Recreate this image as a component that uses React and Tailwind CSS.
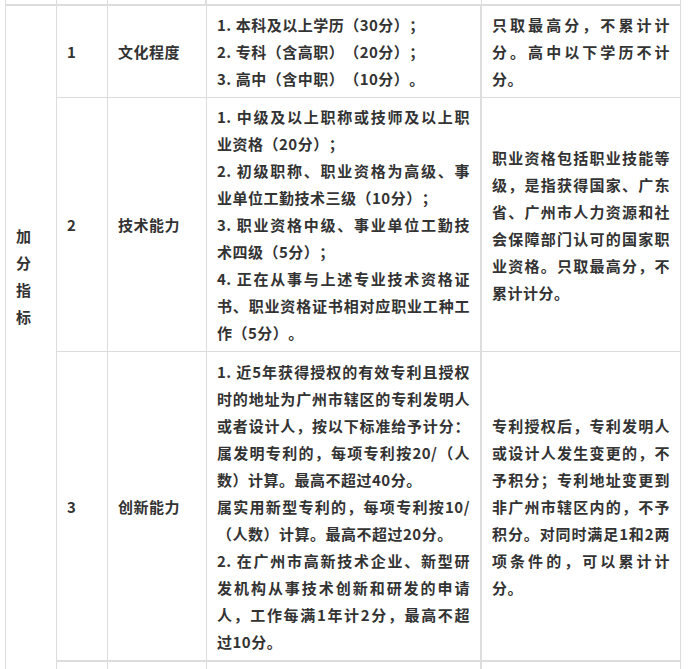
import React from 'react';

// one visual line; justified lines stretch to the cell width like the original wrap
const Line = ({ children, j }) => (
    <div className={j ? 'text-justify [text-align-last:justify]' : 'text-left'}>{children}</div>
);

const Lines = ({ rows }) => (
    <div>
        {rows.map(([t, j], i) => (
            <Line key={i} j={j}>{t}</Line>
        ))}
    </div>
);

const b = 'border-r border-b border-[#ddd] px-[10px]';

const rows = [
    {
        no: '1',
        name: '文化程度',
        detail: [
            ['1. 本科及以上学历（30分）；'],
            ['2. 专科（含高职）（20分）；'],
            ['3. 高中（含中职）（10分）。'],
        ],
        note: [
            ['只取最高分，不累计计', true],
            ['分。高中以下学历不计', true],
            ['分。'],
        ],
    },
    {
        no: '2',
        name: '技术能力',
        detail: [
            ['1. 中级及以上职称或技师及以上职', true],
            ['业资格（20分）；'],
            ['2. 初级职称、职业资格为高级、事', true],
            ['业单位工勤技术三级（10分）；'],
            ['3. 职业资格中级、事业单位工勤技', true],
            ['术四级（5分）；'],
            ['4. 正在从事与上述专业技术资格证', true],
            ['书、职业资格证书相对应职业工种工', true],
            ['作（5分）。'],
        ],
        note: [
            ['职业资格包括职业技能等', true],
            ['级，是指获得国家、广东', true],
            ['省、广州市人力资源和社', true],
            ['会保障部门认可的国家职', true],
            ['业资格。只取最高分，不', true],
            ['累计计分。'],
        ],
    },
    {
        no: '3',
        name: '创新能力',
        detail: [
            ['1. 近5年获得授权的有效专利且授权', true],
            ['时的地址为广州市辖区的专利发明人', true],
            ['或者设计人，按以下标准给予计分：', true],
            ['属发明专利的，每项专利按20/（人', true],
            ['数）计算。最高不超过40分。'],
            ['属实用新型专利的，每项专利按10/', true],
            ['（人数）计算。最高不超过20分。'],
            ['2. 在广州市高新技术企业、新型研', true],
            ['发机构从事技术创新和研发的申请', true],
            ['人，工作每满1年计2分，最高不超', true],
            ['过10分。'],
        ],
        note: [
            ['专利授权后，专利发明人', true],
            ['或设计人发生变更的，不', true],
            ['予积分；专利地址变更到', true],
            ['非广州市辖区内的，不予', true],
            ['积分。对同时满足1和2两', true],
            ['项条件的，可以累计计', true],
            ['分。'],
        ],
    },
];

const App = () => {
    return (
        <div className="h-[669px] overflow-hidden bg-white">
            <div className="ml-[5px] w-max border-l border-[#ddd] grid grid-cols-[51px_51px_99px_275px_199px] grid-rows-[6px_92px_254px_310px_40px] font-['Noto_Sans_CJK_SC',sans-serif] font-bold text-[15px] leading-[27px] tracking-[0.5px] text-[#333] [text-spacing-trim:space-all]">
                {/* tail of the row above */}
                <div className="border-r border-b-2 border-[#ddd]"></div>
                <div className="border-r border-b-2 border-[#ddd]"></div>
                <div className="border-r-2 border-b-2 border-[#ddd]"></div>
                <div className="border-r border-b-2 border-[#ddd]"></div>
                <div className="border-r border-b-2 border-[#ddd]"></div>

                {/* --- 加分指标 spans all rows --- */}
                <div className="col-start-1 row-start-2 row-span-4 border-r border-[#ddd] px-[10px] pt-[216px]">
                    {'加分指标'.split('').map((c) => (
                        <div key={c}>{c}</div>
                    ))}
                </div>

                {rows.map((r, i) => (
                    <React.Fragment key={r.no}>
                        <div className={`${b} ${i === 2 ? 'border-b-2' : ''} flex items-center`}>{r.no}</div>
                        <div className={`${b} ${i === 2 ? 'border-b-2' : ''} flex items-center`}>{r.name}</div>
                        <div className={`${b} border-r-2 ${i === 2 ? 'border-b-2' : ''} flex flex-col justify-center`}>
                            <Lines rows={r.detail} />
                        </div>
                        <div className={`${b} ${i === 2 ? 'border-b-2' : ''} flex flex-col justify-center`}>
                            <Lines rows={r.note} />
                        </div>
                    </React.Fragment>
                ))}

                {/* start of the next row */}
                <div className="border-r border-[#ddd]"></div>
                <div className="border-r border-[#ddd]"></div>
                <div className="border-r-2 border-[#ddd]"></div>
                <div className="border-r border-[#ddd]"></div>
            </div>
        </div>
    );
};

export default App;
